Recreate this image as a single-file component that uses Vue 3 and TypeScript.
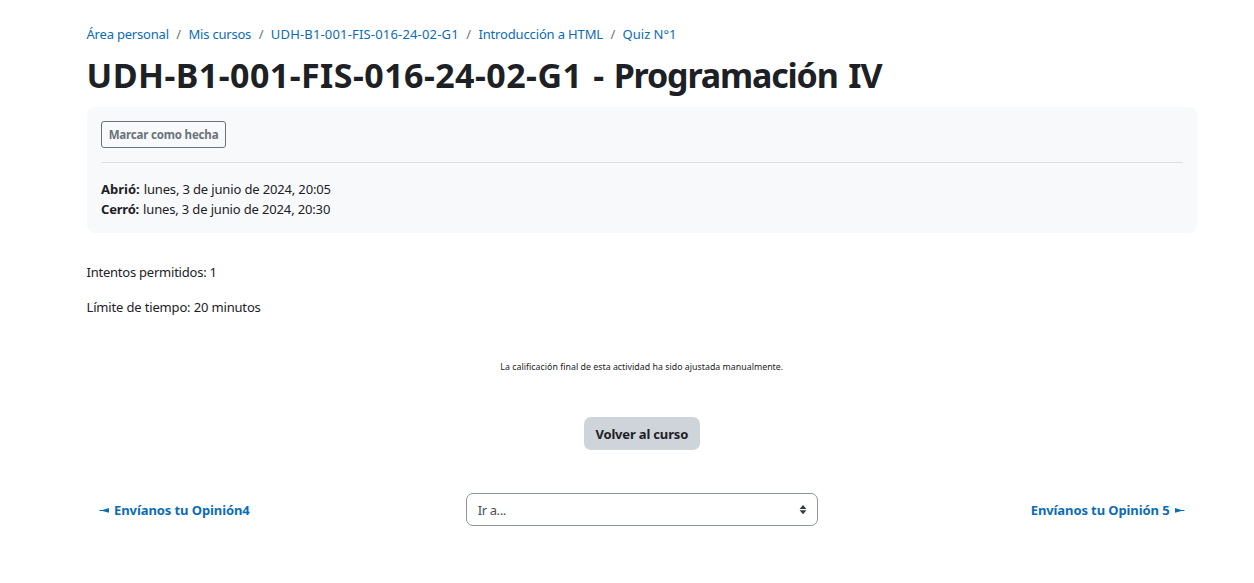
<script setup lang="ts">
interface Crumb { label: string; cls: string }
const crumbs: Crumb[] = [
  { label: 'Área personal', cls: 'home' },
  { label: 'Mis cursos', cls: 'courses' },
  { label: 'UDH-B1-001-FIS-016-24-02-G1', cls: 'code' },
  { label: 'Introducción a HTML', cls: 'topic' },
  { label: 'Quiz N°1', cls: 'quiz' },
]
const dates = [
  { label: 'Abrió:', value: 'lunes, 3 de junio de 2024, 20:05', cls: 'opened' },
  { label: 'Cerró:', value: 'lunes, 3 de junio de 2024, 20:30', cls: 'closed' },
]
</script>

<template>
  <main class="page">
    <nav class="breadcrumb">
      <span v-for="c in crumbs" :key="c.label" class="crumb" :class="c.cls"><a href="#">{{ c.label }}</a></span>
    </nav>
    <h1><span class="course-code">UDH-B1-001-FIS-016-24-02-G1</span> <span class="course-name">- Programación IV</span></h1>

    <section class="info">
      <button class="done" type="button">Marcar como hecha</button>
      <div class="dates">
        <div v-for="d in dates" :key="d.label" class="date" :class="d.cls"><strong>{{ d.label }}</strong><span>{{ d.value }}</span></div>
      </div>
    </section>

    <p class="attempts">Intentos permitidos: 1</p>
    <p class="limit">Límite de tiempo: 20 minutos</p>
    <p class="note">La calificación final de esta actividad ha sido ajustada manualmente.</p>

    <div class="back"><button type="button">Volver al curso</button></div>

    <footer class="nav">
      <a class="prev" href="#">
        <svg width="11" height="8" viewBox="0 0 11 8"><path d="M.5 4 H3.5 L10 2 V6.8 L3.5 5 H.5Z" /></svg>
        <span>Envíanos tu Opinión4</span>
      </a>
      <div class="select">
        <span>Ir a...</span>
        <svg width="8" height="10" viewBox="0 0 8 10"><path d="M4 0 L7.4 4 H.6Z M.6 5.2 H7.4 L4 9.2Z" /></svg>
      </div>
      <a class="next" href="#">
        <span>Envíanos tu Opinión 5</span>
        <svg width="11" height="8" viewBox="0 0 11 8"><path d="M10.5 4 H7.5 L1 2 V6.8 L7.5 5 H10.5Z" /></svg>
      </a>
    </footer>
  </main>
</template>

<style>
body { background: #fff; }
</style>

<style scoped>
* { box-sizing: border-box; }
.page {
  width: 1110.5px;
  height: 583px;
  margin-left: 86.5px;
  padding-top: 24px;
  font: 13px/20px "Segoe UI", "Noto Sans", sans-serif;
  color: #1d2125;
  white-space: nowrap;
}
a { color: #0b6cb4; text-decoration: none; }
.breadcrumb { display: flex; height: 20px; letter-spacing: -0.2px; }
.code a { letter-spacing: 0.17px; }
.topic a { letter-spacing: -0.15px; }
.quiz a { letter-spacing: 0; }
.crumb + .crumb::before { content: "/"; color: #6a737b; padding: 0 7.5px; }
h1 { margin: 10px 0 0; height: 43px; font-size: 34px; line-height: 42px; font-weight: 700; }
.course-code { letter-spacing: 0.44px; }
.course-name { letter-spacing: -1.15px; word-spacing: 3px; margin-left: 2px; }
.info { height: 126px; margin-top: 10px; padding: 14px 14.5px; border-radius: 8px; background: #f8f9fb; }
.done {
  display: block; width: 125px; height: 27px; padding: 0; border: 1px solid #6a737b; border-radius: 3px;
  background: transparent; color: #6a737b; letter-spacing: -0.18px;
  font: 700 11.5px/24px "Segoe UI", "Noto Sans", sans-serif;
}
.dates { margin-top: 14px; padding-top: 16px; border-top: 1px solid #dcdfe2; }
.date { display: flex; gap: 4px; height: 20px; letter-spacing: -0.15px; }
.opened strong { letter-spacing: 0; }
.closed strong { letter-spacing: -0.2px; }
p { margin: 0; }
.attempts { margin-top: 29px; letter-spacing: -0.23px; }
.limit { margin-top: 15px; letter-spacing: -0.16px; }
.note { margin-top: 40px; text-align: center; font-size: 8.8px; line-height: 20px; letter-spacing: 0.02px; }
.back { display: flex; justify-content: center; margin-top: 40px; }
.back button {
  width: 116px; height: 33px; padding: 1px 0 0; border: 0; border-radius: 7px; background: #ced4da; color: #1d2125;
  font: 700 13px/32px "Segoe UI", "Noto Sans", sans-serif; letter-spacing: -0.17px;
}
.nav { display: grid; grid-template-columns: 1fr 352px 1fr; align-items: center; margin-top: 43px; font-weight: 700; }
.prev, .next { display: flex; align-items: center; gap: 4.5px; }
.prev { padding-left: 12px; letter-spacing: -0.09px; }
.next { padding-right: 12px; justify-content: flex-end; letter-spacing: -0.1px; }
.prev svg, .next svg { fill: #0b6cb4; }
.select {
  display: flex; align-items: center; justify-content: space-between; height: 33px; padding: 0 10px 0 11px;
  border: 1px solid #8f959e; border-radius: 7px; color: #495057; font-weight: 400; letter-spacing: -0.4px;
}
.select svg { fill: #343a40; }
</style>
